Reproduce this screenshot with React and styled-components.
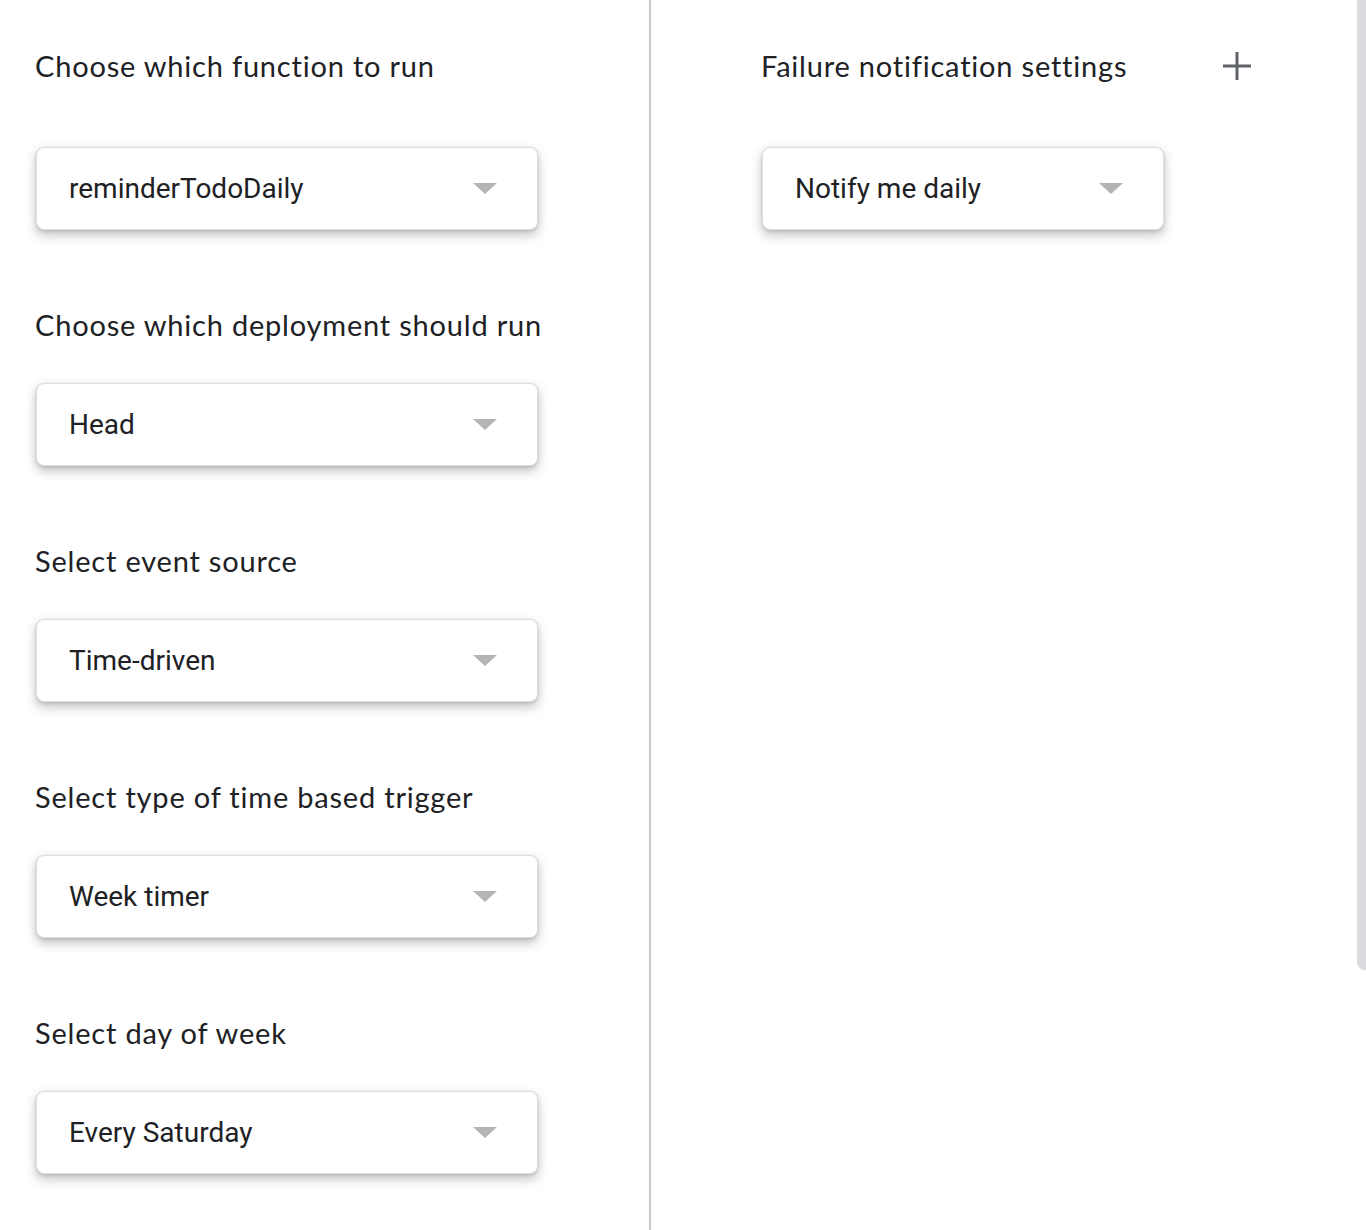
import styled, { createGlobalStyle } from "styled-components"

const Global = createGlobalStyle`
    html, body {
        margin: 0;
        padding: 0;
        background: #ffffff;
    }
    * {
        box-sizing: border-box;
    }
`

const fields = [
    { label: "Choose which function to run", value: "reminderTodoDaily" },
    { label: "Choose which deployment should run", value: "Head" },
    { label: "Select event source", value: "Time-driven" },
    { label: "Select type of time based trigger", value: "Week timer" },
    { label: "Select day of week", value: "Every Saturday" },
]

function Select({ value, wide }) {
    return (
        <SelectBox $wide={wide}>
            <span>{value}</span>
            <Arrow />
        </SelectBox>
    )
}

export default function App() {
    return (
        <Page>
            <Global />
            <LeftPane>
                {fields.map((f, i) => (
                    <Field key={f.label} $first={i === 0}>
                        <Label>{f.label}</Label>
                        <Select value={f.value} wide />
                    </Field>
                ))}
            </LeftPane>

            <RightPane>
                <Field $first>
                    <HeaderRow>
                        <Label>Failure notification settings</Label>
                        <PlusButton aria-label="Add">
                            <svg width="30" height="30" viewBox="0 0 30 30">
                                <path d="M15 1v28M1 15h28" stroke="#5f6368" strokeWidth="3" fill="none" />
                            </svg>
                        </PlusButton>
                    </HeaderRow>
                    <Select value="Notify me daily" />
                </Field>
            </RightPane>

            <Scrollbar />
        </Page>
    )
}

const Page = styled.div`
    position: relative;
    display: flex;
    min-height: 1230px;
    background: #ffffff;
`

const LeftPane = styled.div`
    width: 651px;
    flex-shrink: 0;
    padding: 48px 0 0 35px;
    border-right: 2px solid #c8c8c8;
    display: flex;
    flex-direction: column;
    gap: 77px;
`

const RightPane = styled.div`
    flex: 1;
    padding: 48px 0 0 110px;
`

const Field = styled.div`
    display: flex;
    flex-direction: column;
    gap: ${p => (p.$first ? "63px" : "40px")};
`

const HeaderRow = styled.div`
    display: flex;
    align-items: center;
    justify-content: space-between;
    width: 491px;
`

const Label = styled.div`
    font-family: Lato, "Open Sans", sans-serif;
    font-size: 29px;
    line-height: 36px;
    color: #202124;
    letter-spacing: 0.8px;
`

const PlusButton = styled.button`
    border: none;
    background: none;
    padding: 0;
    width: 30px;
    height: 30px;
    display: flex;
    align-items: center;
    justify-content: center;
    cursor: pointer;
`

const SelectBox = styled.div`
    width: ${p => (p.$wide ? "502px" : "402px")};
    height: 83px;
    margin-left: 1px;
    padding: 0 40px 0 32px;
    display: flex;
    align-items: center;
    justify-content: space-between;
    background: #ffffff;
    border: 1.5px solid #dcdde0;
    border-radius: 8px;
    box-shadow: 0 5px 11px rgba(60, 64, 67, 0.32), 0 1px 3px rgba(60, 64, 67, 0.18);

    >span{
        font-family: Roboto, "Liberation Sans", sans-serif;
        font-size: 28px;
        color: #202124;
    }
`

const Arrow = styled.div`
    width: 0;
    height: 0;
    border-left: 12px solid transparent;
    border-right: 12px solid transparent;
    border-top: 11px solid #b4b4b4;
`

const Scrollbar = styled.div`
    position: absolute;
    top: 0;
    right: 0;
    width: 9px;
    height: 970px;
    background: #dadce0;
    border-radius: 0 0 0 8px;
`
